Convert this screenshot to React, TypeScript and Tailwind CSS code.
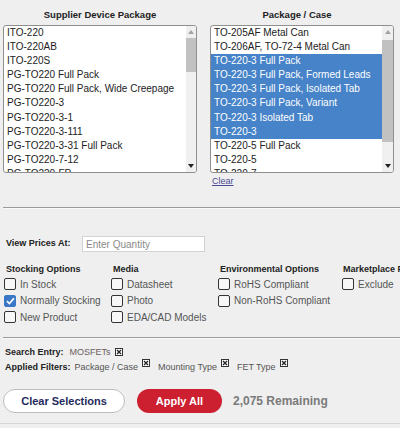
import React from "react";

const supplierPackages = [
  "ITO-220",
  "ITO-220AB",
  "ITO-220S",
  "PG-TO220 Full Pack",
  "PG-TO220 Full Pack, Wide Creepage",
  "PG-TO220-3",
  "PG-TO220-3-1",
  "PG-TO220-3-111",
  "PG-TO220-3-31 Full Pack",
  "PG-TO220-7-12",
  "PG-TO220-FP",
];

const packageCases = [
  { name: "TO-205AF Metal Can", selected: false },
  { name: "TO-206AF, TO-72-4 Metal Can", selected: false },
  { name: "TO-220-3 Full Pack", selected: true },
  { name: "TO-220-3 Full Pack, Formed Leads", selected: true },
  { name: "TO-220-3 Full Pack, Isolated Tab", selected: true },
  { name: "TO-220-3 Full Pack, Variant", selected: true },
  { name: "TO-220-3 Isolated Tab", selected: true },
  { name: "TO-220-3", selected: true },
  { name: "TO-220-5 Full Pack", selected: false },
  { name: "TO-220-5", selected: false },
  { name: "TO-220-7", selected: false },
];

const Arrow = ({ up }: { up?: boolean }) => (
  <div className="h-[12px] flex items-center justify-center">
    <svg width="6" height="4" viewBox="0 0 6 4">
      {up ? (
        <path d="M0 4 L3 0 L6 4 Z" fill="#a3a3a3" />
      ) : (
        <path d="M0 0 L6 0 L3 4 Z" fill="#222" />
      )}
    </svg>
  </div>
);

const Checkbox = ({ checked }: { checked?: boolean }) =>
  checked ? (
    <span className="w-[12px] h-[12px] rounded-[2px] bg-[#3a77c6] border border-[#3a77c6] flex items-center justify-center shrink-0">
      <svg width="9" height="8" viewBox="0 0 9 8">
        <path d="M1 4.2 L3.4 6.5 L8 1.2" stroke="white" strokeWidth="1.7" fill="none" />
      </svg>
    </span>
  ) : (
    <span className="w-[12px] h-[12px] rounded-[2px] bg-[#f7f7f7] border-[1.5px] border-[#333] shrink-0" />
  );

const Option = ({ label, checked }: { label: string; checked?: boolean }) => (
  <div className="h-[16.5px] flex items-center gap-[4px]">
    <Checkbox checked={checked} />
    <span className="text-[10px] text-[#555] whitespace-nowrap">{label}</span>
  </div>
);

const RemoveIcon = () => (
  <span className="inline-flex w-[8px] h-[8px] border border-[#333] bg-white items-center justify-center">
    <svg width="6" height="6" viewBox="0 0 6 6">
      <path d="M1 1 L5 5 M5 1 L1 5" stroke="#222" strokeWidth="1.3" />
    </svg>
  </span>
);

export default function App() {
  return (
    <div className="w-[400px] h-[428px] bg-[#efefef] overflow-hidden font-['Liberation_Sans',Arial,sans-serif] text-[#222]">
      <div className="h-[207px] flex pt-[9px]">
        <div className="ml-[3px] w-[194px]">
          <div className="text-center text-[9.5px] font-bold leading-[12px] mb-[4px]">Supplier Device Package</div>
          <div className="h-[148px] border border-[#8f8f8f] rounded-[3px] bg-white flex overflow-hidden">
            <div className="flex-1 overflow-hidden">
              {supplierPackages.map((p) => (
                <div key={p} className="h-[14.1px] leading-[14.1px] text-[10px] pl-[3px] whitespace-nowrap">
                  {p}
                </div>
              ))}
            </div>
            <div className="w-[10px] bg-[#f0f0f0] flex flex-col">
              <Arrow up />
              <div className="flex-1">
                <div className="h-[34px] bg-[#c1c1c1]" />
              </div>
              <Arrow />
            </div>
          </div>
        </div>
        <div className="ml-[13px] w-[184px]">
          <div className="text-center text-[9.5px] font-bold leading-[12px] mb-[4px] pr-[10px]">Package / Case</div>
          <div className="h-[148px] border border-[#8f8f8f] rounded-[3px] bg-white flex overflow-hidden">
            <div className="flex-1 overflow-hidden">
              {packageCases.map((p) => (
                <div
                  key={p.name}
                  className={
                    p.selected
                      ? "h-[14.1px] leading-[14.1px] text-[10px] pl-[3px] whitespace-nowrap bg-[#4683c8] text-white"
                      : "h-[14.1px] leading-[14.1px] text-[10px] pl-[3px] whitespace-nowrap"
                  }
                >
                  {p.name}
                </div>
              ))}
            </div>
            <div className="w-[11px] bg-[#f0f0f0] flex flex-col">
              <Arrow up />
              <div className="flex-1">
                <div className="mt-[2px] h-[102px] bg-[#c1c1c1]" />
              </div>
              <Arrow />
            </div>
          </div>
          <div className="mt-[3px] pl-[2px] text-[9px] leading-[10px] text-[#4b4b94] underline">Clear</div>
        </div>
      </div>

      <div className="ml-[3px] h-[2px] border-t border-[#9a9a9a] border-b border-b-[#f9f9f9]" />

      <div className="mt-[27px] h-[16px] flex items-center pl-[6px]">
        <span className="text-[9px] font-bold w-[76px]">View Prices At:</span>
        <input
          className="w-[123px] h-[16px] bg-white border border-[#d2d2d2] text-[10px] px-[3px] outline-none placeholder:text-[#8a8a8a]"
          placeholder="Enter Quantity"
        />
      </div>

      <div className="mt-[11px] grid grid-cols-[107px_107px_124px_1fr] pl-[4px]">
        <div>
          <div className="h-[13px] leading-[12px] text-[9px] font-bold pl-[2px] whitespace-nowrap">Stocking Options</div>
          <Option label="In Stock" />
          <Option label="Normally Stocking" checked />
          <Option label="New Product" />
        </div>
        <div>
          <div className="h-[13px] leading-[12px] text-[9px] font-bold pl-[2px]">Media</div>
          <Option label="Datasheet" />
          <Option label="Photo" />
          <Option label="EDA/CAD Models" />
        </div>
        <div>
          <div className="h-[13px] leading-[12px] text-[9px] font-bold pl-[2px] whitespace-nowrap">Environmental Options</div>
          <Option label="RoHS Compliant" />
          <Option label="Non-RoHS Compliant" />
        </div>
        <div className="overflow-hidden">
          <div className="h-[13px] leading-[12px] text-[9px] font-bold pl-[1px] whitespace-nowrap">Marketplace Product</div>
          <Option label="Exclude" />
        </div>
      </div>

      <div className="mt-[11.5px] ml-[3px] h-[2px] border-t border-[#9a9a9a] border-b border-b-[#f9f9f9]" />

      <div className="mt-[7px] h-[12px] flex items-start pl-[5px] text-[9px] leading-[12px]">
        <span className="font-bold">Search Entry:</span>
        <span className="ml-[6px] text-[#6b5c5c]">MOSFETs</span>
        <span className="ml-[4px]">
          <RemoveIcon />
        </span>
      </div>

      <div className="mt-[3px] h-[12px] flex items-start pl-[5px] text-[9px] leading-[12px]">
        <span className="font-bold">Applied Filters:</span>
        <span className="ml-[4px] text-[#555]">Package / Case</span>
        <span className="ml-[4px] -mt-[4px]">
          <RemoveIcon />
        </span>
        <span className="ml-[8px] text-[#555]">Mounting Type</span>
        <span className="ml-[4px] -mt-[4px]">
          <RemoveIcon />
        </span>
        <span className="ml-[8px] text-[#555]">FET Type</span>
        <span className="ml-[4px] -mt-[4px]">
          <RemoveIcon />
        </span>
      </div>

      <div className="mt-[16px] h-[24px] flex items-center pl-[3px]">
        <button className="w-[122px] h-[24px] rounded-full bg-white border border-[#bdbdbd] text-[11px] font-bold text-[#1f2a5c]">
          Clear Selections
        </button>
        <button className="ml-[12px] w-[85px] h-[24px] rounded-full bg-[#cc2030] text-[11px] font-bold text-white">
          Apply All
        </button>
        <span className="ml-[11px] text-[12px] font-bold text-[#7a7a7a]">2,075 Remaining</span>
      </div>

      <div className="mt-[10px] h-px bg-[#d6d6d6]" />
    </div>
  );
}
